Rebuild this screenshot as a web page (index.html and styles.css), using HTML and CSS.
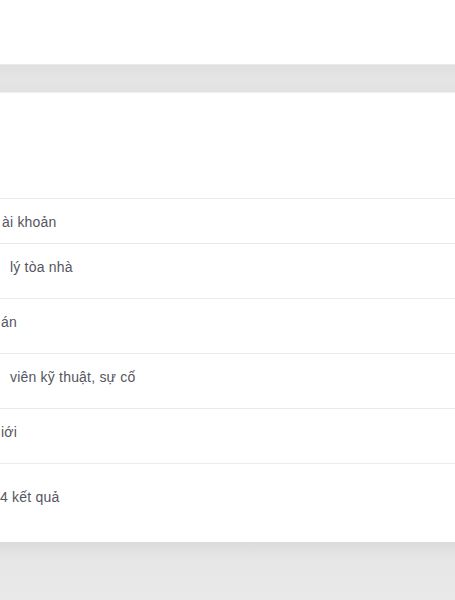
FILE: index.html
```html
<!DOCTYPE html>
<html lang="vi">
<head>
<meta charset="utf-8">
<title>Danh sách</title>
<link rel="stylesheet" href="styles.css">
</head>
<body>
<div class="page">
  <header class="top"></header>
  <div class="band"></div>
  <section class="panel">
    <div class="panel-head"></div>
    <ul class="list">
      <li class="row row-first"><span class="txt lead">ài khoản</span></li>
      <li class="row"><span class="txt gap">lý tòa nhà</span></li>
      <li class="row"><span class="txt edge">án</span></li>
      <li class="row"><span class="txt gap">viên kỹ thuật, sự cố</span></li>
      <li class="row"><span class="txt edge">iới</span></li>
      <li class="row row-foot"><span class="txt">4 kết quả</span></li>
    </ul>
  </section>
  <footer class="bottom"></footer>
</div>
</body>
</html>
```
FILE: styles.css
```css
* { box-sizing: border-box; }
html, body { margin: 0; padding: 0; background: #ffffff; }
body {
  font-family: "Liberation Sans", Arial, Helvetica, sans-serif;
  font-size: 14px;
  letter-spacing: 0.2px;
  color: #55555e;
  width: 455px;
  height: 600px;
  overflow: hidden;
}
.page { display: flex; flex-direction: column; height: 600px; }
.top { height: 64px; background: #ffffff; flex: none; }
.band {
  flex: none;
  height: 29px;
  border-top: 1px solid #ebebeb;
  border-bottom: 1px solid #efefef;
  background: linear-gradient(#dfe0df, #e4e5e4 50%, #e1e2e1);
}
.panel { background: #ffffff; flex: none; }
.panel-head { height: 105px; }
.list { list-style: none; margin: 0; padding: 0; }
.row {
  border-top: 1px solid #e8e8ef;
  padding: 14px 0 22px 0;
  line-height: 18px;
  height: 55px;
  white-space: nowrap;
}
.row-first { height: 45px; padding-bottom: 12px; }
.row-foot { height: 79px; padding-top: 24px; border-top: 1px solid #ececf2; }
.txt { display: block; }
.lead { padding-left: 2px; }
.gap { padding-left: 10px; }
.edge { padding-left: 1px; }
.bottom {
  flex: 1;
  background: linear-gradient(#dadbda, #e6e6e6 16px, #e9e9e9);
}
```
